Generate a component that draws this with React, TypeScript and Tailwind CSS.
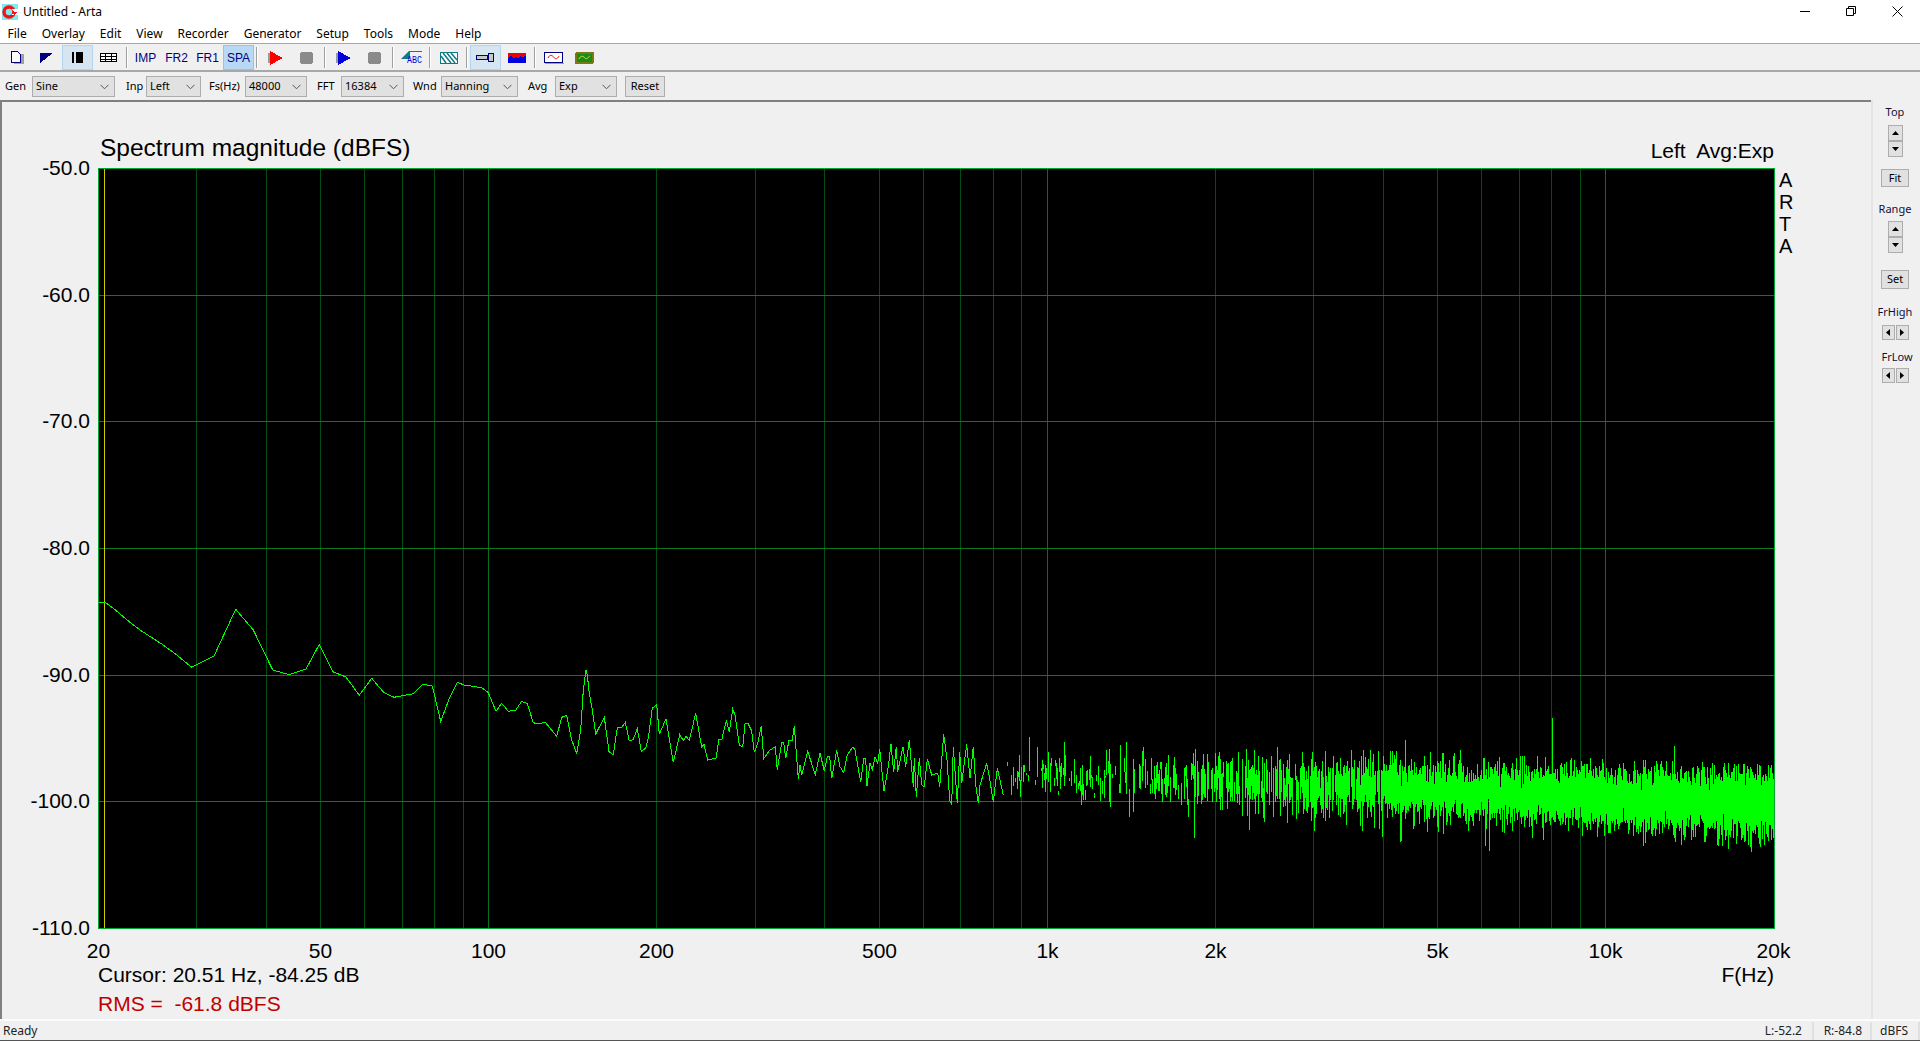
import type { ReactNode } from "react";

const menus = ["File", "Overlay", "Edit", "View", "Recorder", "Generator", "Setup", "Tools", "Mode", "Help"];

// plot geometry, px inside the svg
const PLOT_W = 1677;
const PLOT_H = 761;
const DECADE = 558.4;
const fx = (f: number) => Math.round(DECADE * Math.log10(f / 20)) + 0.5;

const minorFreqs = [30, 40, 50, 60, 70, 80, 90, 200, 300, 400, 500, 600, 700, 800, 900, 2000, 3000, 4000, 5000, 6000, 7000, 8000, 9000];
const majorFreqs = [100, 1000, 10000];
const xLabels: [number, string][] = [
  [20, "20"], [50, "50"], [100, "100"], [200, "200"], [500, "500"], [1000, "1k"],
  [2000, "2k"], [5000, "5k"], [10000, "10k"], [20000, "20k"],
];
const yLabels = ["-50.0", "-60.0", "-70.0", "-80.0", "-90.0", "-100.0", "-110.0"];

// read off the trace, crop coords at 3x
const lowTrace = [[25,67],[45,67],[70,85],[120,127],[150,150],[220,195],[260,225],[305,262],[372,228],[437,88],[490,150],[548,270],[597,284],[648,267],[688,193],[728,275],[768,291],[808,346],[845,295],[880,336],[912,352],[970,341],[998,313],[1027,318],[1052,424],[1080,350],[1102,307],[1122,315],[1175,323],[1195,338],[1218,394],[1235,370],[1255,394],[1277,391],[1295,364],[1312,371],[1330,428],[1345,432],[1365,426],[1400,469],[1415,412],[1430,406],[1445,480],[1460,520],[1472,450],[1480,330],[1488,270],[1492,285],[1498,340]];
const midTrace = [[22,150],[32,222],[58,172],[72,275],[85,284],[97,203],[110,202],[121,187],[133,243],[145,238],[157,206],[169,274],[182,265],[190,235],[202,145],[215,133],[223,223],[243,176],[265,307],[284,224],[295,242],[303,229],[313,241],[332,160],[350,262],[357,253],[368,300],[393,294],[402,238],[410,240],[424,181],[433,215],[443,148],[450,165],[463,255],[473,260],[480,192],[488,189],[500,213],[508,277],[518,250],[529,198],[536,296],[553,272],[571,260],[577,330],[590,247],[596,247],[602,295],[612,240],[622,240],[628,198],[640,358],[645,316],[650,345],[668,274],[691,344],[705,280],[718,332],[727,290],[734,290],[740,355],[755,271],[765,320],[776,338],[787,285],[804,260],[810,270],[827,367],[836,295],[842,295],[846,378],[855,310],[862,330],[870,290],[878,310],[884,268],[897,393],[910,320],[918,252],[926,337],[934,260],[938,335],[954,260],[962,320],[973,240],[985,380],[988,295],[994,410],[1003,295],[1010,375],[1018,380],[1027,297],[1040,345],[1058,340],[1064,380],[1076,223],[1086,300],[1094,420],[1100,435],[1105,260],[1117,428],[1124,275],[1130,370],[1145,253],[1155,355],[1165,260],[1172,375],[1180,430],[1185,375],[1205,310],[1212,345],[1225,425],[1237,325],[1255,405]];

// single bins that stick out of the noise, [screen x, screen y]
const spikes: [number, number][] = [
  [1029, 737], [1109, 749], [1194, 837], [1249, 829], [1382, 836], [1401, 840], [1552, 718],
  [1674, 746], [1489, 850], [1485, 845], [1643, 845], [1751, 851], [1728, 848], [1405, 740],
  [1460, 750], [1643, 757], [1400, 841], [1302, 752],
];

function buildTrace() {
  const low = lowTrace.map(([x, y]) => [90 + x / 3 - 98, 580 + y / 3 - 168]);
  const mid = midTrace.map(([x, y]) => [585 + x / 3 - 98, 660 + y / 3 - 168]);
  const line = [...low, ...mid].map(([x, y]) => `${x.toFixed(1)} ${y.toFixed(1)}`).join(" L");

  let seed = 20517;
  const rand = () => {
    seed = (seed + 0x6d2b79f5) | 0;
    let t = Math.imul(seed ^ (seed >>> 15), 1 | seed);
    t = (t + Math.imul(t ^ (t >>> 7), 61 | t)) ^ t;
    return ((t ^ (t >>> 14)) >>> 0) / 4294967296;
  };
  const gauss = () => Math.sqrt(-2 * Math.log(rand() + 1e-6)) * Math.cos(6.283 * rand());

  let noise = "";
  for (let x = 906; x < 1676; x++) {
    const t = (x - 906) / 770;
    const center = 607 + 28 * t;
    const sigma = 13 + 1.5 * t;
    const bins = 2 + Math.round(24 * t * t);
    let top = Infinity;
    let bottom = -Infinity;
    for (let i = 0; i < bins; i++) {
      const y = center + sigma * gauss();
      const v = Math.max(center - 38, Math.min(center + 44, y));
      top = Math.min(top, v);
      bottom = Math.max(bottom, v);
    }
    const spike = spikes.find((s) => s[0] - 98 === x);
    if (spike) {
      top = Math.min(top, spike[1] - 168);
      bottom = Math.max(bottom, spike[1] - 168);
    }
    const skip = rand() < Math.max(0, 0.6 - t * 1.2);
    if (!skip || spike) noise += `M${x + 0.5} ${Math.round(top)}V${Math.round(bottom) + 1}`;
  }
  return { line: `M${line}`, noise };
}

const trace = buildTrace();

function Plot() {
  return (
    <svg width={PLOT_W} height={PLOT_H} className="block shrink-0" shapeRendering="crispEdges">
      <rect width={PLOT_W} height={PLOT_H} fill="#000" />
      {minorFreqs.map((f) => (
        <line key={f} x1={fx(f)} x2={fx(f)} y1={0} y2={PLOT_H} stroke="#044d12" />
      ))}
      {majorFreqs.map((f) => (
        <line key={f} x1={fx(f)} x2={fx(f)} y1={0} y2={PLOT_H} stroke="#06701c" />
      ))}
      {[1, 2, 3, 4, 5].map((i) => {
        const y = Math.round((760 * i) / 6) + 0.5;
        return <line key={i} x1={0} x2={PLOT_W} y1={y} y2={y} stroke="#0b7a1e" />;
      })}
      <line x1={6.5} x2={6.5} y1={0} y2={PLOT_H} stroke="#d0cc00" />
      <path d={trace.line} fill="none" stroke="#00ff00" />
      <path d={trace.noise} fill="none" stroke="#00ff00" />
      <rect x={0.5} y={0.5} width={PLOT_W - 1} height={PLOT_H - 1} fill="none" stroke="#00a832" />
    </svg>
  );
}

function Sep() {
  return <div className="mx-[2px] h-[21px] w-[2px] shrink-0 self-center border-l border-r border-l-[#a0a0a0] border-r-white" />;
}

function ToolBtn({ children, on, strong }: { children: ReactNode; on?: boolean; strong?: boolean }) {
  return (
    <div
      className={`flex h-[25px] w-[31px] shrink-0 items-center justify-center border font-['Liberation_Sans',sans-serif] text-[12px] text-[#000080] ${
        on ? (strong ? "border-[#8fc4ee] bg-[#b8d9f5]" : "border-[#b5d5ee] bg-[#d5e5f2]") : "border-transparent"
      }`}
    >
      {children}
    </div>
  );
}

function Icon({ w, h, children }: { w: number; h: number; children: ReactNode }) {
  return (
    <svg width={w} height={h} viewBox={`0 0 ${w} ${h}`} shapeRendering="crispEdges">
      {children}
    </svg>
  );
}

const stopIcon = (
  <Icon w={13} h={12}>
    <path d="M1 0h11v1h1v10h-1v1H1v-1H0V1h1z" fill="#8a8a8a" />
  </Icon>
);

function playIcon(color: string) {
  return (
    <Icon w={16} h={14}>
      <rect x={0} y={2} width={3} height={10} fill="#9a9a9a" />
      <path d="M2 0L15 7L2 14Z" fill={color} />
    </Icon>
  );
}

function Combo({ value, w }: { value: string; w: number }) {
  return (
    <div
      className="flex h-[21px] shrink-0 items-center justify-between border border-[#adadad] bg-[#e1e1e1] pl-[3px] pr-[5px]"
      style={{ width: w }}
    >
      <span>{value}</span>
      <svg width="9" height="6" viewBox="0 0 9 6">
        <path d="M0.5 0.8L4.5 4.8L8.5 0.8" fill="none" stroke="#555" />
      </svg>
    </div>
  );
}

function Arrow({ dir }: { dir: "up" | "down" | "left" | "right" }) {
  const d = {
    up: "M0 4L3.5 0L7 4Z",
    down: "M0 0L7 0L3.5 4Z",
    left: "M4 0L4 7L0 3.5Z",
    right: "M0 0L0 7L4 3.5Z",
  }[dir];
  const box = dir === "up" || dir === "down" ? [7, 4] : [4, 7];
  return (
    <svg width={box[0]} height={box[1]} viewBox={`0 0 ${box[0]} ${box[1]}`}>
      <path d={d} fill="#000" />
    </svg>
  );
}

function Spin({ dir, className }: { dir: "up" | "down" | "left" | "right"; className: string }) {
  return (
    <div className={`flex items-center justify-center border border-[#adadad] bg-[#e1e1e1] ${className}`}>
      <Arrow dir={dir} />
    </div>
  );
}

function VSpin() {
  return (
    <div className="flex flex-col">
      <Spin dir="up" className="h-[16px] w-[15px]" />
      <Spin dir="down" className="h-[16px] w-[15px]" />
    </div>
  );
}

function HSpin() {
  return (
    <div className="flex gap-[1px]">
      <Spin dir="left" className="h-[15px] w-[13px]" />
      <Spin dir="right" className="h-[15px] w-[13px]" />
    </div>
  );
}

function SideBtn({ label, className }: { label: string; className: string }) {
  return (
    <div className={`flex w-[28px] items-center justify-center border border-[#adadad] bg-[#e1e1e1] ${className}`}>
      {label}
    </div>
  );
}

export default function App() {
  return (
    <div className="flex h-screen w-[1920px] flex-col overflow-hidden bg-[#f0f0f0] font-['Noto_Sans',sans-serif] text-[11px] text-black">
      {/* title bar */}
      <div className="flex h-[22px] shrink-0 items-center bg-white">
        <svg width="16" height="16" viewBox="0 0 16 16" className="ml-[2px] mt-[1px]" shapeRendering="crispEdges">
          <rect x="0" y="0" width="16" height="16" fill="#7fe8f0" />
          <circle cx="7" cy="8" r="5" fill="none" stroke="#f01414" strokeWidth="3.4" shapeRendering="auto" />
          <path d="M9 5h7v6H9l3-3z" fill="#fff" />
          <path d="M10 8h5l-2.500 3z" fill="#f01414" />
        </svg>
        <span className="ml-[5px] mt-[2px] text-[12px]">Untitled - Arta</span>
        <div className="ml-auto flex h-full items-start">
          <div className="flex h-[22px] w-[46px] items-center justify-center">
            <svg width="11" height="11" viewBox="0 0 11 11"><path d="M0 5.500H10" stroke="#000" /></svg>
          </div>
          <div className="flex h-[22px] w-[46px] items-center justify-center">
            <svg width="11" height="11" viewBox="0 0 11 11">
              <path d="M2.500 2.500V0.500H9.500V7.500H7.500M0.500 2.500H7.500V9.500H0.500Z" fill="none" stroke="#000" />
            </svg>
          </div>
          <div className="flex h-[22px] w-[46px] items-center justify-center">
            <svg width="11" height="11" viewBox="0 0 11 11"><path d="M0.500 0.500L10.500 10.500M10.500 0.500L0.500 10.500" stroke="#000" /></svg>
          </div>
        </div>
      </div>

      {/* menu */}
      <div className="flex h-[22px] shrink-0 items-center border-b border-[#a8a8a8] bg-white pt-[2px] text-[12px]">
        {menus.map((m) => (
          <span key={m} className="px-[7.5px]">{m}</span>
        ))}
      </div>

      {/* main toolbar */}
      <div className="flex h-[28px] shrink-0 items-start border-b-2 border-[#a8a8a8] pt-[1px]">
        <ToolBtn>
          <div className="ml-[4px]">
            <Icon w={13} h={13}>
              <rect x="3" y="3" width="10" height="10" fill="#a0a0a0" />
              <path d="M0.500 0.500H6.500L9.500 3.500V11.500H0.500Z" fill="#fff" stroke="#000080" />
            </Icon>
          </div>
        </ToolBtn>
        <ToolBtn>
          <Icon w={13} h={10}>
            <path d="M0 0H13L0 10Z" fill="#000080" />
          </Icon>
        </ToolBtn>
        <ToolBtn on>
          <Icon w={11} h={11}>
            <rect x="0" y="0" width="2" height="11" fill="#000" />
            <rect x="4" y="0" width="7" height="11" fill="#000" />
          </Icon>
        </ToolBtn>
        <ToolBtn>
          <Icon w={17} h={9}>
            <path d="M0.500 0.500H16.500V8.500H0.500ZM0.500 3.500H16.500M0.500 6H16.500M5.500 0.500V8.500M11.500 0.500V8.500" fill="#fff" stroke="#000" />
          </Icon>
        </ToolBtn>
        <Sep />
        <ToolBtn>IMP</ToolBtn>
        <ToolBtn>FR2</ToolBtn>
        <ToolBtn>FR1</ToolBtn>
        <ToolBtn on strong>SPA</ToolBtn>
        <Sep />
        <ToolBtn>{playIcon("#ff0000")}</ToolBtn>
        <ToolBtn>{stopIcon}</ToolBtn>
        <Sep />
        <ToolBtn>{playIcon("#0000e0")}</ToolBtn>
        <ToolBtn>{stopIcon}</ToolBtn>
        <Sep />
        <ToolBtn>
          <svg width="22" height="13" viewBox="0 0 22 13" className="overflow-visible">
            <path d="M0 8L8 0H21V1H9V8Z" fill="#0e7a86" />
            <text x="6" y="12" fontSize="10" textLength={15} lengthAdjust="spacingAndGlyphs" fontFamily="'Liberation Mono', monospace" fill="#0000e0">ABC</text>
          </svg>
        </ToolBtn>
        <Sep />
        <ToolBtn>
          <Icon w={18} h={12}>
            <rect x="0.500" y="0.500" width="17" height="11" fill="#fff" stroke="#0e7a86" />
            <path d="M3 1L11 11M7 1L15 11M11 1L17 8M1 4L6 11" stroke="#0e7a86" strokeWidth="1.500" shapeRendering="auto" />
          </Icon>
        </ToolBtn>
        <Sep />
        <ToolBtn on>
          <Icon w={19} h={9}>
            <rect x="0.500" y="2.500" width="11" height="4" fill="#c8c8c8" stroke="#000080" />
            <rect x="12.500" y="0.500" width="5" height="8" rx="1" fill="#c8c8c8" stroke="#000080" />
          </Icon>
        </ToolBtn>
        <ToolBtn>
          <Icon w={18} h={10}>
            <path d="M0 5L3 1L6 2L8 0L11 3L14 1L18 3V10H0Z" fill="#0000e0" />
            <path d="M0 0H18V3L14 4L12 3L10 6L8 3L6 5L3 3L0 5Z" fill="#f00000" />
          </Icon>
        </ToolBtn>
        <Sep />
        <ToolBtn>
          <Icon w={20} h={12}>
            <rect x="0.500" y="0.500" width="18" height="10" fill="#fff" stroke="#000080" />
            <rect x="1" y="11" width="19" height="1" fill="#a0a0a0" />
            <path d="M4 6C6 2 8 3 10 5.500C12 8 14 6 15 4" fill="none" stroke="#e00000" shapeRendering="auto" />
          </Icon>
        </ToolBtn>
        <ToolBtn>
          <Icon w={19} h={12}>
            <rect x="0" y="0" width="19" height="12" rx="2" fill="#7a7a10" />
            <rect x="2" y="2" width="15" height="8" fill="#1c8a1c" />
            <path d="M4 7C6 3 8 4 10 6C12 8 13 5 15 4" fill="none" stroke="#e8e800" shapeRendering="auto" />
          </Icon>
        </ToolBtn>
      </div>

      {/* settings row */}
      <div className="flex h-[28px] shrink-0 items-center pl-[5px] pt-[1px]">
        <span className="w-[27px]">Gen</span>
        <Combo value="Sine" w={83} />
        <span className="ml-[11px] w-[20px]">Inp</span>
        <Combo value="Left" w={55} />
        <span className="ml-[8px] w-[36px]">Fs(Hz)</span>
        <Combo value="48000" w={62} />
        <span className="ml-[10px] w-[24px]">FFT</span>
        <Combo value="16384" w={63} />
        <span className="ml-[9px] w-[28px]">Wnd</span>
        <Combo value="Hanning" w={77} />
        <span className="ml-[10px] w-[27px]">Avg</span>
        <Combo value="Exp" w={62} />
        <div className="ml-[8px] flex h-[21px] w-[40px] items-center justify-center border border-[#adadad] bg-[#e1e1e1]">
          Reset
        </div>
      </div>

      <div className="flex min-h-0 flex-1">
        {/* graph panel */}
        <div className="flex flex-1 flex-col border-l-2 border-t-2 border-[#808080] font-['Liberation_Sans',sans-serif] text-[21px] leading-[24px]">
          <div className="flex h-[66px] items-end justify-between pb-[5px] pl-[98px]" style={{ width: 1772 }}>
            <span className="mb-[1px] text-[24.5px] leading-[28px]">Spectrum magnitude (dBFS)</span>
            <span className="whitespace-pre">Left  Avg:Exp</span>
          </div>

          <div className="flex">
            <div className="-my-[12px] flex w-[96px] flex-col items-end justify-between pr-[8px]" style={{ height: 784 }}>
              {yLabels.map((l) => (
                <span key={l}>{l}</span>
              ))}
            </div>
            <Plot />
            <div className="ml-[4px] flex flex-col pt-[1px] text-[20px] leading-[22px]">
              {"ARTA".split("").map((c, i) => (
                <span key={i}>{c}</span>
              ))}
            </div>
          </div>

          <div className="relative mt-[10px] h-[24px] shrink-0" style={{ marginLeft: 96, width: PLOT_W }}>
            {xLabels.map(([f, label]) => (
              <span key={label} className="absolute top-0 -translate-x-1/2" style={{ left: fx(f) }}>
                {label}
              </span>
            ))}
          </div>
          <div className="flex justify-between" style={{ marginLeft: 96, width: PLOT_W - 1 }}>
            <span>Cursor: 20.51 Hz, -84.25 dB</span>
            <span>F(Hz)</span>
          </div>
          <div className="mt-[5px] whitespace-pre text-[#c00000]" style={{ marginLeft: 96 }}>
            RMS =  -61.8 dBFS
          </div>
        </div>

        {/* right side controls */}
        <div className="flex w-[49px] shrink-0 flex-col items-center border-l-2 border-[#e4e4e4] pr-[3px] pt-[5px] text-[#10103a]">
          <span className="leading-[14px]">Top</span>
          <div className="mt-[6px]"><VSpin /></div>
          <SideBtn label="Fit" className="mt-[12px] h-[18px] text-black" />
          <span className="mt-[15px] leading-[14px]">Range</span>
          <div className="mt-[5px]"><VSpin /></div>
          <SideBtn label="Set" className="mt-[17px] h-[19px] text-black" />
          <span className="mt-[16px] leading-[14px]">FrHigh</span>
          <div className="mt-[6px]"><HSpin /></div>
          <span className="ml-[4px] mt-[10px] leading-[14px]">FrLow</span>
          <div className="mt-[4px]"><HSpin /></div>
        </div>
      </div>

      {/* status bar */}
      <div className="flex h-[22px] shrink-0 items-center border-b border-t-2 border-b-[#555] border-t-[#fcfcfc] text-[12px] text-[#222]">
        <span className="ml-[3px]">Ready</span>
        <div className="ml-auto flex h-full items-center">
          <span className="w-[50px] border-r-2 border-[#e0e0e0] pr-[10px] text-right">L:-52.2</span>
          <span className="w-[58px] border-r-2 border-[#e0e0e0] pr-[8px] text-right">R:-84.8</span>
          <span className="w-[48px] border-r-2 border-[#e0e0e0] pr-[10px] text-right">dBFS</span>
        </div>
      </div>
    </div>
  );
}
